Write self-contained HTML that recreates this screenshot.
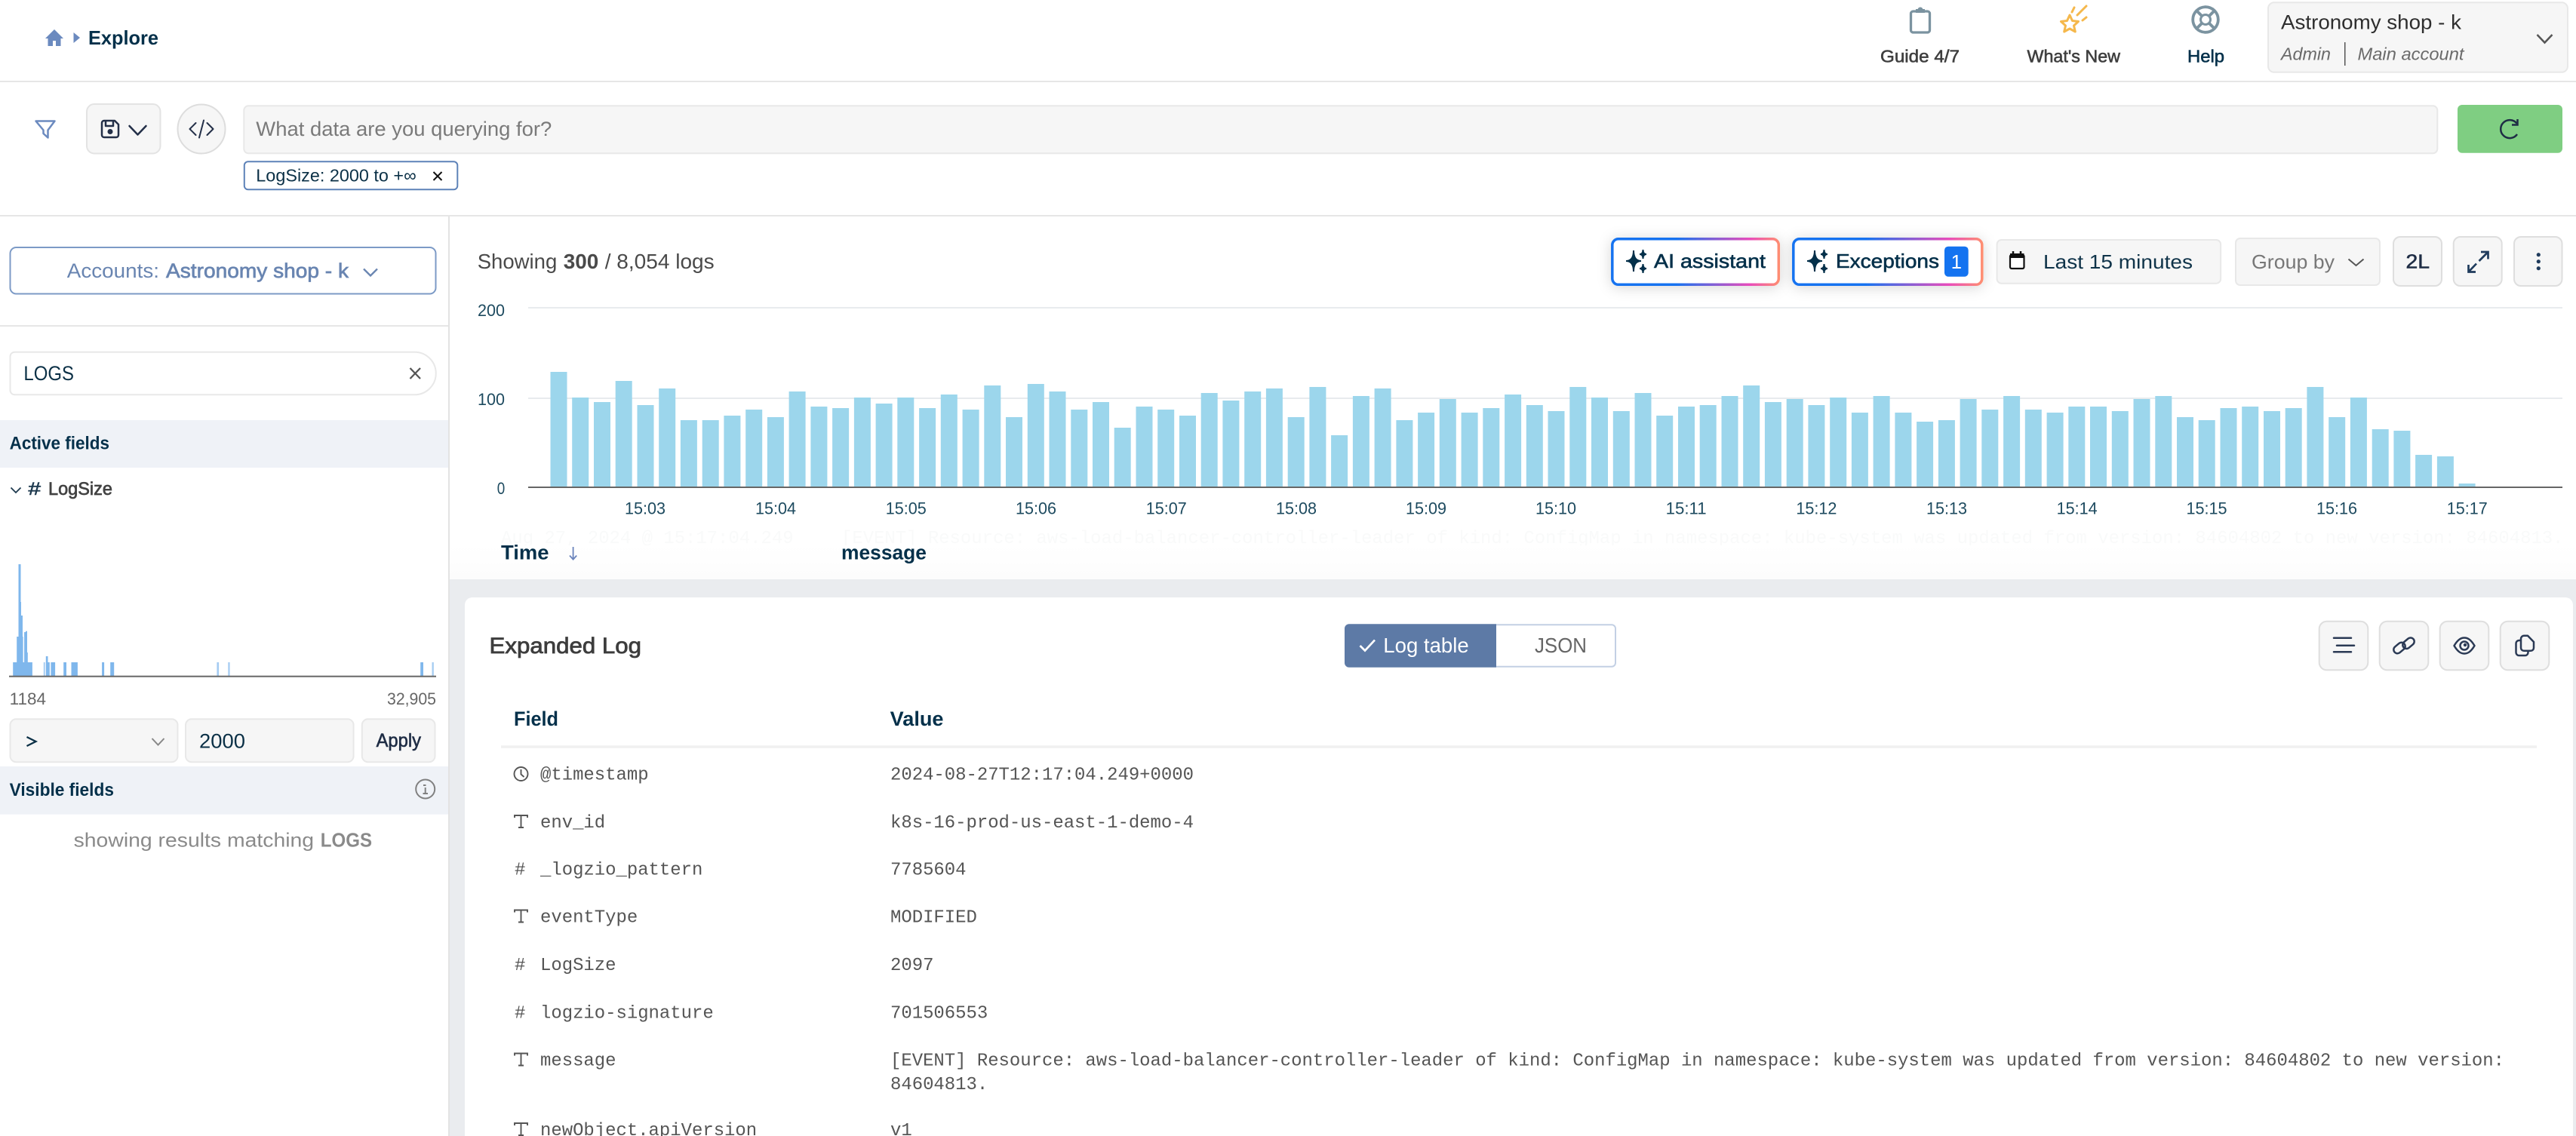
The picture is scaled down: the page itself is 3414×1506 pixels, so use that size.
<!DOCTYPE html>
<html lang="en">
<head>
<meta charset="utf-8">
<title>Explore</title>
<style>
html,body{margin:0;padding:0;background:#fff;width:3414px;height:1506px;overflow:hidden}
svg{display:block;position:absolute;left:0;top:0}
text{font-family:"Liberation Sans",sans-serif;white-space:pre}
.m{font-family:"Liberation Mono",monospace;font-size:23.93px;fill:#555}
.b{font-weight:700}
.ax{font-size:22px;fill:#1d4a5f}
.ic{fill:none;stroke:#232f48;stroke-width:2.5;stroke-linecap:round;stroke-linejoin:round}
.fi{fill:none;stroke:#555;stroke-width:1.9}
</style>
</head>
<body>
<svg xmlns="http://www.w3.org/2000/svg" width="3414" height="1506" viewBox="0 0 3414 1506">
<defs>
<linearGradient id="g1" gradientUnits="userSpaceOnUse" x1="2135" y1="0" x2="2359" y2="0"><stop offset="0" stop-color="#1473f0"/><stop offset=".38" stop-color="#1473f0"/><stop offset=".82" stop-color="#e84cbb"/><stop offset="1" stop-color="#ff8f70"/></linearGradient>
<linearGradient id="g2" gradientUnits="userSpaceOnUse" x1="2375" y1="0" x2="2628" y2="0"><stop offset="0" stop-color="#1473f0"/><stop offset=".38" stop-color="#1473f0"/><stop offset=".82" stop-color="#e84cbb"/><stop offset="1" stop-color="#ff8f70"/></linearGradient>
<linearGradient id="fade" x1="0" y1="0" x2="0" y2="1"><stop offset="0" stop-color="#fff"/><stop offset="1" stop-color="#fcfcfc"/></linearGradient>
<filter id="sh" x="-20%" y="-50%" width="140%" height="200%"><feDropShadow dx="0" dy="2" stdDeviation="9" flood-color="#000" flood-opacity=".16"/></filter>
</defs>

<!-- top bar -->
<rect x="0" y="107" width="3414" height="2" fill="#e6e6e6"/>
<path d="M72 39 60 51h3.500v10h6.500v-7h4v7h6.500V51H84z" fill="#6b8abf"/>
<path d="M97.500 43 106 50l-8.500 7z" fill="#6b8abf"/>
<text x="117" y="59" font-size="26" class="b" fill="#04304a" textLength="93" lengthAdjust="spacingAndGlyphs">Explore</text>

<g fill="none" stroke="#7b93a0" stroke-width="3.300">
<rect x="2532.500" y="15" width="25" height="28" rx="3"/>
<path d="M2540 16v-3h2.500a2.500 2.500 0 0 1 5 0h2.500v3z" fill="#7b93a0" stroke-width="2"/>
<circle cx="2923" cy="26" r="16.800" stroke-width="3.800"/>
<circle cx="2923" cy="26" r="6.500" stroke-width="3"/>
<path d="M2911.500 14.500l7 7M2934.500 14.500l-7 7M2911.500 37.500l7-7M2934.500 37.500l-7-7" stroke-width="4"/>
</g>
<g fill="none" stroke="#f5b84c" stroke-width="3" stroke-linecap="round" stroke-linejoin="round">
<path d="M2743 20l3.500 7.500 8 1-6 5.500 1.800 8-7.300-4-7.300 4 1.800-8-6-5.500 8-1z"/>
<path d="M2746 16l3-6M2753 20l12-12M2760 27l5-4"/>
</g>
<text x="2492" y="82.700" font-size="23.500" fill="#3f3f3f" stroke="#3f3f3f" stroke-width=".6" textLength="105" lengthAdjust="spacingAndGlyphs">Guide 4/7</text>
<text x="2686.500" y="82.700" font-size="23.500" fill="#3f3f3f" stroke="#3f3f3f" stroke-width=".6" textLength="123.500" lengthAdjust="spacingAndGlyphs">What's New</text>
<text x="2899" y="82.700" font-size="23.500" fill="#04304a" stroke="#04304a" stroke-width=".6" textLength="49" lengthAdjust="spacingAndGlyphs">Help</text>

<rect x="3006" y="3.300" width="397" height="92.500" rx="8" fill="#f6f6f6" stroke="#e8e8e8" stroke-width="2"/>
<text x="3023" y="38.300" font-size="27" fill="#2e2e2e" textLength="239" lengthAdjust="spacingAndGlyphs">Astronomy shop - k</text>
<text x="3023" y="79.300" font-size="23" font-style="italic" fill="#6a6a6a" textLength="66" lengthAdjust="spacingAndGlyphs">Admin</text>
<rect x="3107" y="56" width="1.500" height="31" fill="#555"/>
<text x="3124.500" y="79.300" font-size="23" font-style="italic" fill="#6a6a6a" textLength="141" lengthAdjust="spacingAndGlyphs">Main account</text>
<path d="M3362.500 46l10 10.500 10-10.500" fill="none" stroke="#555" stroke-width="2.500"/>

<!-- query bar -->
<path d="M47.500 160.500h25L63.500 172.500v10l-6-5.500v-4.500z" fill="none" stroke="#6b8abf" stroke-width="2.500" stroke-linejoin="round"/>
<rect x="115" y="138" width="97.500" height="65.500" rx="10" fill="#f6f6f6" stroke="#e3e3e3" stroke-width="2"/>
<path class="ic" d="M138 160h14l5 5v14a3 3 0 0 1-3 3h-16a3 3 0 0 1-3-3v-16a3 3 0 0 1 3-3zM140 160v7h10v-7"/>
<circle cx="146" cy="174.500" r="3.500" fill="#232f48"/>
<path class="ic" d="M171.500 167l11 11.500 11-11.500"/>
<ellipse cx="267" cy="171" rx="31.500" ry="32.500" fill="#f6f6f6" stroke="#dddddd" stroke-width="2"/>
<path class="ic" style="stroke-width:2" d="M259.500 163l-8 8 8 8M274.500 163l8 8-8 8M270 159.500l-6 23"/>
<rect x="323.300" y="140.300" width="2907" height="63" rx="6" fill="#f6f6f6" stroke="#e8e8e8" stroke-width="2"/>
<text x="339.300" y="180" font-size="27" fill="#7a7a7a" textLength="392" lengthAdjust="spacingAndGlyphs">What data are you querying for?</text>
<rect x="3257" y="139" width="139" height="63.700" rx="6" fill="#7fce82"/>
<path d="M3335.500 163.500A12 12 0 1 0 3336 178M3336.500 158v7.500h-7.500" fill="none" stroke="#1f2d45" stroke-width="2.500"/>
<rect x="323.800" y="214.300" width="282.500" height="37" rx="5" fill="#fff" stroke="#5d82b8" stroke-width="2"/>
<text x="339.300" y="240.700" font-size="23.500" fill="#0b3046" textLength="212.500" lengthAdjust="spacingAndGlyphs">LogSize: 2000 to +∞</text>
<path d="M574.500 228l11 11M585.500 228l-11 11" stroke="#111" stroke-width="2" fill="none"/>
<rect x="0" y="285" width="3414" height="2" fill="#e6e6e6"/>

<!-- main backgrounds -->
<rect x="596" y="768" width="2818" height="738" fill="#eaecef"/>
<rect x="594" y="287" width="2" height="1219" fill="#e3e3e3"/>

<!-- sidebar -->
<rect x="13.500" y="328" width="564" height="61.500" rx="8" fill="#fff" stroke="#7c9ac6" stroke-width="2"/>
<text x="88.800" y="368" font-size="27" fill="#6985b1" textLength="122.200" lengthAdjust="spacingAndGlyphs">Accounts:</text>
<text x="220" y="368" font-size="27" fill="#6985b1" stroke="#6985b1" stroke-width=".7" textLength="242" lengthAdjust="spacingAndGlyphs">Astronomy shop - k</text>
<path d="M482 356.500l9 9 9-9" fill="none" stroke="#6985b1" stroke-width="2.300"/>
<rect x="0" y="431" width="594" height="2" fill="#e6e6e6"/>
<path d="M19.500 466.700h530a28.300 28.300 0 0 1 0 56.600h-530a6 6 0 0 1-6-6v-44.600a6 6 0 0 1 6-6z" fill="#fff" stroke="#e8e8e8" stroke-width="2"/>
<text x="31.400" y="504" font-size="27" fill="#0b3046" textLength="66.600" lengthAdjust="spacingAndGlyphs">LOGS</text>
<path d="M543.500 488l13.500 14M557 488l-13.500 14" fill="none" stroke="#555" stroke-width="2.300"/>
<rect x="0" y="557" width="594" height="63" fill="#eff2f7"/>
<text x="12.600" y="595.700" font-size="24" class="b" fill="#04304a" textLength="132.400" lengthAdjust="spacingAndGlyphs">Active fields</text>
<path d="M14.500 646.500l6.500 6.500 6.500-6.500" fill="none" stroke="#1e3a4f" stroke-width="1.800"/>
<text x="37.500" y="656" font-size="24" fill="#1e3a4f" stroke="#1e3a4f" stroke-width=".6" textLength="16.500" lengthAdjust="spacingAndGlyphs">#</text>
<text x="64" y="656" font-size="24" fill="#424242" stroke="#424242" stroke-width=".7" textLength="85" lengthAdjust="spacingAndGlyphs">LogSize</text>

<g fill="#7fb7ec">
<rect x="17.200" y="878" width="25.700" height="18"/>
<rect x="22.200" y="844" width="8.400" height="34"/>
<rect x="24.500" y="748" width="3" height="96"/>
<rect x="25.300" y="798" width="2.700" height="46"/>
<rect x="27.500" y="816" width="2.500" height="28"/>
<rect x="32.100" y="838" width="2" height="40"/>
<rect x="34" y="836.700" width="2" height="41.300"/>
<rect x="34.500" y="865" width="2.300" height="13"/>
<rect x="57.800" y="878" width="1.900" height="18" opacity=".7"/>
<rect x="60.800" y="870" width="2.700" height="26"/>
<rect x="63.500" y="878" width="2.300" height="18"/>
<rect x="67.400" y="878" width="5.700" height="18"/>
<rect x="84.200" y="878" width="3.800" height="18"/>
<rect x="94.500" y="878" width="8.400" height="18"/>
<rect x="135.100" y="878" width="3" height="18"/>
<rect x="146.200" y="878" width="5" height="18"/>
<rect x="287.400" y="878" width="2.700" height="18" opacity=".7"/>
<rect x="302.300" y="878" width="2.300" height="18" opacity=".7"/>
<rect x="557.200" y="878" width="3.800" height="18"/>
<rect x="572.500" y="878" width="2.300" height="18" opacity=".7"/>
</g>
<rect x="12" y="895.700" width="566" height="2" fill="#666"/>
<text x="12.600" y="934" font-size="22.500" fill="#666" textLength="48.400" lengthAdjust="spacingAndGlyphs">1184</text>
<text x="513" y="934" font-size="22.500" fill="#666" textLength="65" lengthAdjust="spacingAndGlyphs">32,905</text>

<rect x="13.500" y="953.300" width="222" height="57" rx="8" fill="#f6f6f6" stroke="#e8e8e8" stroke-width="2"/>
<path d="M35.500 977l12 6-12 6" fill="none" stroke="#0b3046" stroke-width="2.300"/>
<path d="M201.500 979l8 8.500 8-8.500" fill="none" stroke="#888" stroke-width="2"/>
<rect x="246" y="953.300" width="222.600" height="57" rx="8" fill="#f6f6f6" stroke="#e8e8e8" stroke-width="2"/>
<text x="264" y="991.700" font-size="27" fill="#0b3046" textLength="61" lengthAdjust="spacingAndGlyphs">2000</text>
<rect x="479.800" y="953.300" width="96.700" height="57" rx="8" fill="#f6f6f6" stroke="#e8e8e8" stroke-width="2"/>
<text x="498.600" y="990" font-size="25" fill="#1f2d45" stroke="#1f2d45" stroke-width=".6" textLength="59.400" lengthAdjust="spacingAndGlyphs">Apply</text>

<rect x="0" y="1016" width="594" height="63.700" fill="#eff2f7"/>
<text x="12.600" y="1055" font-size="24" class="b" fill="#04304a" textLength="138.400" lengthAdjust="spacingAndGlyphs">Visible fields</text>
<circle cx="563.700" cy="1046" r="12.500" fill="none" stroke="#808080" stroke-width="2"/>
<path d="M561 1041h3.500M563.700 1044v8M560.500 1052h6.500" fill="none" stroke="#808080" stroke-width="2"/>
<text x="97.600" y="1122.700" font-size="26" fill="#8a8a8a" textLength="318.500" lengthAdjust="spacingAndGlyphs">showing results matching</text>
<text x="424.800" y="1122.700" font-size="26" class="b" fill="#8a8a8a" textLength="68.200" lengthAdjust="spacingAndGlyphs">LOGS</text>

<!-- toolbar -->
<text x="632.700" y="356" font-size="28" fill="#4a4a4a" textLength="105.600" lengthAdjust="spacingAndGlyphs">Showing</text>
<text x="746.700" y="356" font-size="28" class="b" fill="#4a4a4a" textLength="46.600" lengthAdjust="spacingAndGlyphs">300</text>
<text x="801.700" y="356" font-size="28" fill="#4a4a4a" textLength="145" lengthAdjust="spacingAndGlyphs">/ 8,054 logs</text>

<g filter="url(#sh)"><rect x="2136.800" y="316.800" width="220.500" height="60.500" rx="8" fill="#fff" stroke="url(#g1)" stroke-width="3.500"/></g>
<g filter="url(#sh)"><rect x="2376.800" y="316.800" width="250" height="60.500" rx="8" fill="#fff" stroke="url(#g2)" stroke-width="3.500"/></g>
<path d="M2165 332Q2165 346 2175 346 2165 346 2165 360 2165 346 2155 346 2165 346 2165 332zM2177.500 331Q2177.500 337 2182 337 2177.500 337 2177.500 343 2177.500 337 2173 337 2177.500 337 2177.500 331zM2177.500 350Q2177.500 356 2182 356 2177.500 356 2177.500 362 2177.500 356 2173 356 2177.500 356 2177.500 350z" fill="#04304a" stroke="#04304a" stroke-width="2"/>
<text x="2192" y="355" font-size="26" fill="#04304a" stroke="#04304a" stroke-width=".6" textLength="148" lengthAdjust="spacingAndGlyphs">AI assistant</text>
<path d="M2405 332Q2405 346 2415 346 2405 346 2405 360 2405 346 2395 346 2405 346 2405 332zM2417.500 331Q2417.500 337 2422 337 2417.500 337 2417.500 343 2417.500 337 2413 337 2417.500 337 2417.500 331zM2417.500 350Q2417.500 356 2422 356 2417.500 356 2417.500 362 2417.500 356 2413 356 2417.500 356 2417.500 350z" fill="#04304a" stroke="#04304a" stroke-width="2"/>
<text x="2433" y="355" font-size="26" fill="#04304a" stroke="#04304a" stroke-width=".6" textLength="137" lengthAdjust="spacingAndGlyphs">Exceptions</text>
<rect x="2577" y="326.700" width="31.700" height="40" rx="5" fill="#1473f0"/>
<text x="2592.800" y="356" font-size="26" fill="#fff" text-anchor="middle">1</text>

<rect x="2646.600" y="318" width="296.500" height="57.700" rx="6" fill="#f6f6f6" stroke="#e8e8e8" stroke-width="2"/>
<rect x="2664" y="338" width="18.500" height="18" rx="2" fill="#fff" stroke="#111" stroke-width="2.200"/>
<rect x="2664" y="336" width="18.500" height="6" fill="#111"/>
<path d="M2668 333v4M2678 333v4" stroke="#111" stroke-width="2.500"/>
<text x="2708" y="356" font-size="26" fill="#0f3349" textLength="198" lengthAdjust="spacingAndGlyphs">Last 15 minutes</text>

<rect x="2963" y="316" width="191" height="62" rx="6" fill="#f6f6f6" stroke="#e8e8e8" stroke-width="2"/>
<text x="2984" y="356" font-size="26" fill="#777" textLength="110" lengthAdjust="spacingAndGlyphs">Group by</text>
<path d="M3112.500 343.500l10 8.500 10-8.500" fill="none" stroke="#555" stroke-width="2"/>

<rect x="3172" y="314" width="64" height="65" rx="9" fill="#f6f6f6" stroke="#dedede" stroke-width="2"/>
<text x="3188.500" y="355.700" font-size="26" fill="#1f2d45" stroke="#1f2d45" stroke-width=".6" textLength="31.500" lengthAdjust="spacingAndGlyphs">2L</text>
<rect x="3251.700" y="314" width="64" height="65" rx="9" fill="#f6f6f6" stroke="#dedede" stroke-width="2"/>
<path d="M3285.500 346l12-12M3288 334h9.500v9.500M3282 349.500l-10.500 11M3271.500 351v9.500h9.500" fill="none" stroke="#1f3b5c" stroke-width="2.700"/>
<rect x="3332" y="314" width="63.500" height="65" rx="9" fill="#f6f6f6" stroke="#dedede" stroke-width="2"/>
<circle cx="3364.300" cy="337.700" r="2.600" fill="#1f3b5c"/>
<circle cx="3364.300" cy="346.700" r="2.600" fill="#1f3b5c"/>
<circle cx="3364.300" cy="355.700" r="2.600" fill="#1f3b5c"/>

<!-- chart -->
<rect x="700" y="407" width="2696" height="2" fill="#e8ebee"/>
<rect x="700" y="527" width="2696" height="2" fill="#e8ebee"/>
<path fill="#9cd6ec" d="M729.500 493h22V646h-22zM758.200 527h22V646h-22zM787 533h22V646h-22zM815.700 505h22V646h-22zM844.500 537h22V646h-22zM873.200 515h22V646h-22zM901.900 557h22V646h-22zM930.700 557h22V646h-22zM959.400 551h22V646h-22zM988.200 543h22V646h-22zM1016.900 553h22V646h-22zM1045.600 519h22V646h-22zM1074.400 539h22V646h-22zM1103.100 541h22V646h-22zM1131.900 527h22V646h-22zM1160.600 535h22V646h-22zM1189.300 527h22V646h-22zM1218.100 541h22V646h-22zM1246.800 523h22V646h-22zM1275.600 543h22V646h-22zM1304.300 511h22V646h-22zM1333 553h22V646h-22zM1361.800 509h22V646h-22zM1390.500 519h22V646h-22zM1419.300 543h22V646h-22zM1448 533h22V646h-22zM1476.700 567h22V646h-22zM1505.500 539h22V646h-22zM1534.200 543h22V646h-22zM1563 551h22V646h-22zM1591.700 521h22V646h-22zM1620.400 531h22V646h-22zM1649.200 519h22V646h-22zM1677.900 515h22V646h-22zM1706.700 553h22V646h-22zM1735.400 513h22V646h-22zM1764.100 577h22V646h-22zM1792.900 525h22V646h-22zM1821.600 515h22V646h-22zM1850.400 557h22V646h-22zM1879.100 547h22V646h-22zM1907.800 529h22V646h-22zM1936.600 547h22V646h-22zM1965.300 541h22V646h-22zM1994.100 523h22V646h-22zM2022.800 537h22V646h-22zM2051.500 545h22V646h-22zM2080.300 513h22V646h-22zM2109 527h22V646h-22zM2137.800 545h22V646h-22zM2166.500 521h22V646h-22zM2195.200 551h22V646h-22zM2224 539h22V646h-22zM2252.700 537h22V646h-22zM2281.500 525h22V646h-22zM2310.200 511h22V646h-22zM2338.900 533h22V646h-22zM2367.700 529h22V646h-22zM2396.400 537h22V646h-22zM2425.200 527h22V646h-22zM2453.900 547h22V646h-22zM2482.600 525h22V646h-22zM2511.400 547h22V646h-22zM2540.100 559h22V646h-22zM2568.900 557h22V646h-22zM2597.600 529h22V646h-22zM2626.300 543h22V646h-22zM2655.100 525h22V646h-22zM2683.800 543h22V646h-22zM2712.600 547h22V646h-22zM2741.300 539h22V646h-22zM2770 539h22V646h-22zM2798.800 545h22V646h-22zM2827.500 529h22V646h-22zM2856.300 525h22V646h-22zM2885 553h22V646h-22zM2913.700 557h22V646h-22zM2942.500 541h22V646h-22zM2971.200 539h22V646h-22zM3000 545h22V646h-22zM3028.700 541h22V646h-22zM3057.400 513h22V646h-22zM3086.200 553h22V646h-22zM3114.900 527h22V646h-22zM3143.700 569h22V646h-22zM3172.400 571h22V646h-22zM3201.100 603h22V646h-22zM3229.900 605h22V646h-22zM3258.600 641h22V646h-22z"/>
<rect x="700" y="645" width="2696" height="2" fill="#666"/>
<g class="ax">
<text class="ax" x="633" y="419" textLength="36" lengthAdjust="spacingAndGlyphs">200</text>
<text class="ax" x="633" y="537" textLength="36" lengthAdjust="spacingAndGlyphs">100</text>
<text class="ax" x="658.700" y="655" textLength="10.500" lengthAdjust="spacingAndGlyphs">0</text>
<text class="ax" x="828" y="681.700" textLength="54" lengthAdjust="spacingAndGlyphs">15:03</text>
<text class="ax" x="1001" y="681.700" textLength="54" lengthAdjust="spacingAndGlyphs">15:04</text>
<text class="ax" x="1173.800" y="681.700" textLength="54" lengthAdjust="spacingAndGlyphs">15:05</text>
<text class="ax" x="1346" y="681.700" textLength="54" lengthAdjust="spacingAndGlyphs">15:06</text>
<text class="ax" x="1518.800" y="681.700" textLength="54" lengthAdjust="spacingAndGlyphs">15:07</text>
<text class="ax" x="1691" y="681.700" textLength="54" lengthAdjust="spacingAndGlyphs">15:08</text>
<text class="ax" x="1863" y="681.700" textLength="54" lengthAdjust="spacingAndGlyphs">15:09</text>
<text class="ax" x="2035" y="681.700" textLength="54" lengthAdjust="spacingAndGlyphs">15:10</text>
<text class="ax" x="2207.600" y="681.700" textLength="54" lengthAdjust="spacingAndGlyphs">15:11</text>
<text class="ax" x="2380.400" y="681.700" textLength="54" lengthAdjust="spacingAndGlyphs">15:12</text>
<text class="ax" x="2553" y="681.700" textLength="54" lengthAdjust="spacingAndGlyphs">15:13</text>
<text class="ax" x="2725.600" y="681.700" textLength="54" lengthAdjust="spacingAndGlyphs">15:14</text>
<text class="ax" x="2897.500" y="681.700" textLength="54" lengthAdjust="spacingAndGlyphs">15:15</text>
<text class="ax" x="3070" y="681.700" textLength="54" lengthAdjust="spacingAndGlyphs">15:16</text>
<text class="ax" x="3242.800" y="681.700" textLength="54" lengthAdjust="spacingAndGlyphs">15:17</text>
</g>

<!-- table head -->
<text x="664" y="720" class="m" style="fill:#f9fafa">Aug 27, 2024 @ 15:17:04.249</text>
<text x="1115" y="720" class="m" style="fill:#f9fafa">[EVENT] Resource: aws-load-balancer-controller-leader of kind: ConfigMap in namespace: kube-system was updated from version: 84604802 to new version: 84604813.</text>
<rect x="596" y="723" width="2818" height="45" fill="url(#fade)"/>
<text x="664" y="741.700" font-size="27" class="b" fill="#04304a" textLength="63.500" lengthAdjust="spacingAndGlyphs">Time</text>
<path d="M759.600 725v16M755 736.500l4.600 5.200 4.600-5.200" fill="none" stroke="#6b84bc" stroke-width="1.800"/>
<text x="1115" y="741.700" font-size="27" class="b" fill="#04304a" textLength="113" lengthAdjust="spacingAndGlyphs">message</text>

<!-- expanded panel -->
<path d="M626 792H3400a10 10 0 0 1 10 10V1506H616V802a10 10 0 0 1 10-10z" fill="#fff"/>
<text x="648.500" y="866" font-size="30" fill="#3d3d3d" stroke="#3d3d3d" stroke-width=".8" textLength="201.500" lengthAdjust="spacingAndGlyphs">Expanded Log</text>

<path d="M1788 827.300H1983V884.700H1788a6 6 0 0 1-6-6v-45.400a6 6 0 0 1 6-6z" fill="#5d7aa6"/>
<path d="M1983 828.300H2136a5 5 0 0 1 5 5v45.400a5 5 0 0 1-5 5H1983" fill="#fff" stroke="#c3d0e4" stroke-width="2"/>
<path d="M1802.500 856l6.500 6.500 13-14" fill="none" stroke="#fff" stroke-width="2.700"/>
<text x="1833.300" y="865" font-size="28" fill="#fff" textLength="113.400" lengthAdjust="spacingAndGlyphs">Log table</text>
<text x="2034" y="865" font-size="28" fill="#666" textLength="69" lengthAdjust="spacingAndGlyphs">JSON</text>

<rect x="3073.700" y="823.700" width="64.600" height="64.600" rx="10" fill="#f6f6f6" stroke="#dedede" stroke-width="2"/>
<rect x="3153.700" y="823.700" width="64.600" height="64.600" rx="10" fill="#f6f6f6" stroke="#dedede" stroke-width="2"/>
<rect x="3233.700" y="823.700" width="64.600" height="64.600" rx="10" fill="#f6f6f6" stroke="#dedede" stroke-width="2"/>
<rect x="3313.700" y="823.700" width="64.600" height="64.600" rx="10" fill="#f6f6f6" stroke="#dedede" stroke-width="2"/>
<g fill="none" stroke="#2b3a55" stroke-width="2.500" stroke-linecap="round" stroke-linejoin="round">
<path d="M3093 845.700h23M3097 855.700h23M3093 864.300h23"/>
<rect x="3171.500" y="854" width="17" height="10" rx="5" transform="rotate(-40 3180 859)"/>
<rect x="3183.500" y="847.700" width="17" height="10" rx="5" transform="rotate(-40 3192 852.700)"/>
<path d="M3252.500 856C3257 848.500 3261 845.500 3266 845.500S3275 848.500 3279.500 856C3275 863.500 3271 866.500 3266 866.500S3257 863.500 3252.500 856Z"/>
<circle cx="3266" cy="856" r="5.500"/>
<path d="M3350 842.800h-5a4 4 0 0 0-4 4v12a4 4 0 0 0 4 4h9a4 4 0 0 0 4-4V851zM3340 849h-1.500a4 4 0 0 0-4 4V865a4 4 0 0 0 4 4h8a4 4 0 0 0 4-4v-2"/>
</g>
<circle cx="3267" cy="855" r="2.200" fill="#2b3a55"/>

<text x="681" y="962" font-size="27" class="b" fill="#04304a" textLength="59" lengthAdjust="spacingAndGlyphs">Field</text>
<text x="1179.700" y="962" font-size="27" class="b" fill="#04304a" textLength="70.800" lengthAdjust="spacingAndGlyphs">Value</text>
<rect x="664" y="988.300" width="2698" height="3.500" fill="#f0f0f0"/>

<circle cx="690.500" cy="1026" r="9" class="fi"/>
<path class="fi" d="M690.500 1020v6.500l4 3.500"/>
<text class="m" x="716" y="1033.700">@timestamp</text>
<text class="m" x="1180" y="1033.700">2024-08-27T12:17:04.249+0000</text>

<path class="fi" d="M682 1084v-3h17v3M690.500 1081v16M687 1097h7"/>
<text class="m" x="716" y="1097">env_id</text>
<text class="m" x="1180" y="1097">k8s-16-prod-us-east-1-demo-4</text>

<text class="m" x="682" y="1159.600">#</text>
<text class="m" x="716" y="1159.600">_logzio_pattern</text>
<text class="m" x="1180" y="1159.600">7785604</text>

<path class="fi" d="M682 1209.500v-3h17v3M690.500 1206.500v16M687 1222.500h7"/>
<text class="m" x="716" y="1222.500">eventType</text>
<text class="m" x="1180" y="1222.500">MODIFIED</text>

<text class="m" x="682" y="1286">#</text>
<text class="m" x="716" y="1286">LogSize</text>
<text class="m" x="1180" y="1286">2097</text>

<text class="m" x="682" y="1349.400">#</text>
<text class="m" x="716" y="1349.400">logzio-signature</text>
<text class="m" x="1180" y="1349.400">701506553</text>

<path class="fi" d="M682 1399.500v-3h17v3M690.500 1396.500v16M687 1412.500h7"/>
<text class="m" x="716" y="1412.300">message</text>
<text class="m" x="1180" y="1412.300">[EVENT] Resource: aws-load-balancer-controller-leader of kind: ConfigMap in namespace: kube-system was updated from version: 84604802 to new version:</text>
<text class="m" x="1180" y="1444">84604813.</text>

<path class="fi" d="M682 1492v-3h17v3M690.500 1489v16M687 1505h7"/>
<text class="m" x="716" y="1505">newObject.apiVersion</text>
<text class="m" x="1180" y="1505">v1</text>
</svg>
</body>
</html>
